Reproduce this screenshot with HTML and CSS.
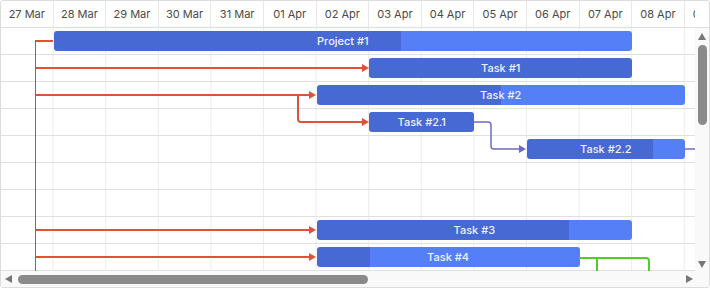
FILE: index.html
```html
<!DOCTYPE html>
<html lang="en">
<head>
    <meta charset="UTF-8">
    <title>Gantt</title>
    <link rel="stylesheet" href="styles.css">
</head>
<body>
    <div class="gantt">
        <div class="timescale">
            <div class="days">
                <div class="day">27 Mar</div>
                <div class="day">28 Mar</div>
                <div class="day">29 Mar</div>
                <div class="day">30 Mar</div>
                <div class="day">31 Mar</div>
                <div class="day">01 Apr</div>
                <div class="day">02 Apr</div>
                <div class="day">03 Apr</div>
                <div class="day">04 Apr</div>
                <div class="day">05 Apr</div>
                <div class="day">06 Apr</div>
                <div class="day">07 Apr</div>
                <div class="day">08 Apr</div>
                <div class="day">09 Apr</div>
            </div>
        </div>

        <div class="chart">
            <div class="row"><div class="bar" style="grid-column: 2 / 13; --done: 60%">Project #1</div></div>
            <div class="row"><div class="bar" style="grid-column: 8 / 13; --done: 100%">Task #1</div></div>
            <div class="row"><div class="bar" style="grid-column: 7 / 14; --done: 50%">Task #2</div></div>
            <div class="row"><div class="bar" style="grid-column: 8 / 10; --done: 100%">Task #2.1</div></div>
            <div class="row"><div class="bar" style="grid-column: 11 / 14; --done: 80%">Task #2.2</div></div>
            <div class="row"></div>
            <div class="row"></div>
            <div class="row"><div class="bar" style="grid-column: 7 / 13; --done: 80%">Task #3</div></div>
            <div class="row"><div class="bar" style="grid-column: 7 / 12; --done: 20%">Task #4</div></div>

            <!-- dependency links, page coordinates -->
            <svg class="links" viewBox="1 28 694 243" width="694" height="243">
                <g class="link-red">
                    <path d="M36 41 H53"/>
                    <path d="M36 68 H362"/>
                    <path d="M36 95 H309"/>
                    <path d="M298 95 V119 Q298 122 301 122 H362"/>
                    <path d="M36 230 H309"/>
                    <path d="M36 257 H309"/>
                </g>
                <g class="arrow-red">
                    <polygon points="369,68 362,64 362,72"/>
                    <polygon points="316,95 309,91 309,99"/>
                    <polygon points="369,122 362,118 362,126"/>
                    <polygon points="316,230 309,226 309,234"/>
                    <polygon points="316,257 309,253 309,261"/>
                </g>
                <path class="trunk" d="M35.5 40 V272"/>
                <g class="link-purple">
                    <path d="M474 122 H488 Q491 122 491 125 V146 Q491 149 494 149 H520"/>
                    <path d="M684 149 H696"/>
                </g>
                <polygon class="arrow-purple" points="526,149 519,145 519,153"/>
                <g class="link-green">
                    <path d="M579 258 H646 Q649 258 649 261 V275"/>
                    <path d="M597 258 V275"/>
                </g>
            </svg>
        </div>

        <div class="vscroll">
            <svg class="arrow" width="8" height="7" viewBox="0 0 8 7"><polygon points="4,0 8,7 0,7"/></svg>
            <div class="vthumb"></div>
            <svg class="arrow" width="8" height="7" viewBox="0 0 8 7"><polygon points="0,0 8,0 4,7"/></svg>
        </div>

        <div class="hscroll">
            <svg class="arrow" width="7" height="8" viewBox="0 0 7 8"><polygon points="7,0 7,8 0,4"/></svg>
            <div class="hthumb"></div>
            <svg class="arrow" width="7" height="8" viewBox="0 0 7 8"><polygon points="0,0 7,4 0,8"/></svg>
        </div>

        <div class="corner"></div>
    </div>
</body>
</html>
```

FILE: styles.css
```css
body {
    margin: 0;
    font-family: 'Inter', 'Noto Sans', sans-serif;
    background: #fff;
}
.gantt {
    width: 710px;
    height: 288px;
    box-sizing: border-box;
    border: 1px solid #dcdcdc;
    border-radius: 3px;
    display: grid;
    grid-template-columns: 694px 14px;
    grid-template-rows: 27px 243px 16px;
    overflow: hidden;
    background: #fff;
}
.timescale {
    grid-column: 1 / 3;
    border-bottom: 1px solid #dedede;
    box-sizing: border-box;
    display: flex;
}
.days {
    width: 694px;
    overflow: hidden;
    display: grid;
    grid-template-columns: repeat(14, 52.6px);
}
.day {
    box-sizing: border-box;
    border-right: 1px solid #e8e8e8;
    display: flex;
    align-items: center;
    justify-content: center;
    font-size: 11px;
    color: #4a4a4a;
    white-space: nowrap;
}
/* chart body */
.chart {
    position: relative;
    overflow: hidden;
    background-image: linear-gradient(to right, transparent 51.6px, #ececec 51.6px);
    background-size: 52.6px 100%;
}
.row {
    height: 27px;
    box-sizing: border-box;
    border-bottom: 1px solid #e0e0e0;
    display: grid;
    grid-template-columns: repeat(14, 52.6px);
    align-items: center;
}
.bar {
    height: 20px;
    border-radius: 3px;
    background: linear-gradient(to right, #4769d4 var(--done), #547ff6 var(--done));
    color: #eef3ff;
    font-size: 11px;
    font-weight: 500;
    display: flex;
    align-items: center;
    justify-content: center;
    white-space: nowrap;
}
.links {
    position: absolute;
    left: 0;
    top: 0;
    pointer-events: none;
    fill: none;
}
.link-red path {
    stroke: #df5239;
    stroke-width: 2;
}
.arrow-red polygon {
    fill: #df5239;
}
.trunk {
    stroke: #b9533f;
    stroke-width: 1;
}
.link-purple path {
    stroke: #6d6cc0;
    stroke-width: 1.5;
}
.arrow-purple {
    fill: #6d6cc0;
}
.link-green path {
    stroke: #4fcf26;
    stroke-width: 2;
}
/* scrollbars */
.vscroll {
    background: #f9f9f9;
    display: grid;
    grid-template-rows: auto 1fr auto;
    justify-items: center;
    row-gap: 5px;
    padding: 5px 0 3px;
    height: 243px;
    box-sizing: border-box;
}
.vthumb {
    width: 9px;
    height: 80px;
    border-radius: 5px;
    background: #8a8a8a;
}
.hscroll {
    background: #f9f9f9;
    display: grid;
    grid-template-columns: auto 1fr auto;
    align-items: center;
    column-gap: 6px;
    padding: 0 2px 0 4px;
}
.hthumb {
    width: 350px;
    height: 9px;
    border-radius: 5px;
    background: #8a8a8a;
}
.corner {
    background: #f9f9f9;
}
.arrow {
    display: block;
    fill: #777;
}
```
